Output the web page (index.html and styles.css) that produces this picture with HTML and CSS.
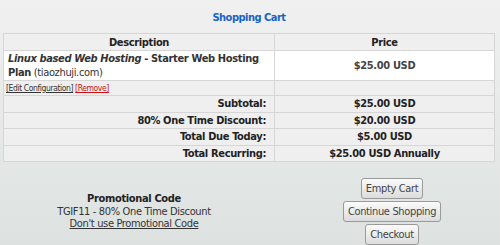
FILE: index.html
```html
<!DOCTYPE html>
<html>
<head>
<meta charset="utf-8">
<link rel="stylesheet" href="styles.css">
</head>
<body>
<div class="page">
  <h1 class="title">Shopping Cart</h1>
  <table class="cart">
    <thead>
      <tr><th class="c-desc">Description</th><th class="c-price">Price</th></tr>
    </thead>
    <tbody>
      <tr class="item">
        <td class="desc"><b><i>Linux based Web Hosting</i> - Starter Web Hosting Plan</b> (tiaozhuji.com)</td>
        <td class="price">$25.00 USD</td>
      </tr>
      <tr class="actions">
        <td class="links"><a href="#" class="edit">[Edit Configuration]</a> <a href="#" class="remove">[Remove]</a></td>
        <td></td>
      </tr>
      <tr class="total"><td class="label">Subtotal:</td><td class="val">$25.00 USD</td></tr>
      <tr class="total"><td class="label">80% One Time Discount:</td><td class="val">$20.00 USD</td></tr>
      <tr class="total"><td class="label">Total Due Today:</td><td class="val">$5.00 USD</td></tr>
      <tr class="total"><td class="label">Total Recurring:</td><td class="val">$25.00 USD Annually</td></tr>
    </tbody>
  </table>
  <div class="bottom">
    <div class="promo">
      <div class="promo-title">Promotional Code</div>
      <div>TGIF11 - 80% One Time Discount</div>
      <a href="#" class="promo-link">Don't use Promotional Code</a>
    </div>
    <div class="buttons">
      <button class="btn">Empty Cart</button>
      <button class="btn">Continue Shopping</button>
      <button class="btn">Checkout</button>
    </div>
  </div>
</div>
</body>
</html>
```

FILE: styles.css
```css
html, body {
  margin: 0;
  padding: 0;
}
body {
  width: 500px;
  height: 245px;
  overflow: hidden;
  background: linear-gradient(#f0f0f0, #dde2e1);
  font-family: "DejaVu Sans Condensed", "DejaVu Sans", sans-serif;
  font-size: 11px;
  letter-spacing: -0.35px;
  color: #333;
}
.page {
  padding: 11px 5px 0 3px;
}
.title {
  margin: 0 0 8px;
  text-align: center;
  font-size: 11px;
  font-weight: bold;
  color: #1a62c7;
  line-height: 14px;
  letter-spacing: -0.5px;
}
.cart {
  width: 492px;
  border-collapse: collapse;
  border: 1px solid #d3d3d3;
}
.cart th, .cart td {
  border: 1px solid #d6d6d6;
  padding: 0 4px;
}
.cart th {
  background: #efefef;
  height: 16px;
  font-weight: bold;
  color: #222;
}
.c-desc { width: 262px; }
.item td {
  background: #fff;
  height: 29px;
}
.desc {
  text-align: left;
  line-height: 13.5px;
  color: #333;
}
.desc b { color: #333; }
.price {
  text-align: center;
  font-weight: bold;
  color: #444;
}
.actions td {
  background: #efefef;
  height: 14px;
  padding: 0 2px;
}
.links {
  font-size: 8.5px;
  letter-spacing: -0.4px;
  line-height: 12px;
}
.edit { color: #333; }
.remove { color: #cc1111; }
.total td {
  background: #efefef;
  height: 15.5px;
  font-weight: bold;
  color: #222;
}
.total .label {
  text-align: right;
  padding-right: 8px;
}
.total .val {
  text-align: center;
}
.bottom {
  display: grid;
  grid-template-columns: 262px 1fr;
  margin-top: 16px;
}
.promo {
  padding-top: 15px;
  text-align: center;
  line-height: 12.5px;
  color: #333;
}
.promo-title {
  font-weight: bold;
  color: #222;
}
.promo-link {
  color: #333;
}
.buttons {
  padding-left: 24px;
  display: flex;
  flex-direction: column;
  align-items: center;
  gap: 2px;
}
.btn {
  font-family: inherit;
  font-size: 11px;
  letter-spacing: -0.35px;
  color: #444;
  height: 21px;
  padding: 0 4px;
  border: 1px solid #9a9a9a;
  border-radius: 3px;
  background: linear-gradient(#fbfbfb, #dcdcdc);
}
```
